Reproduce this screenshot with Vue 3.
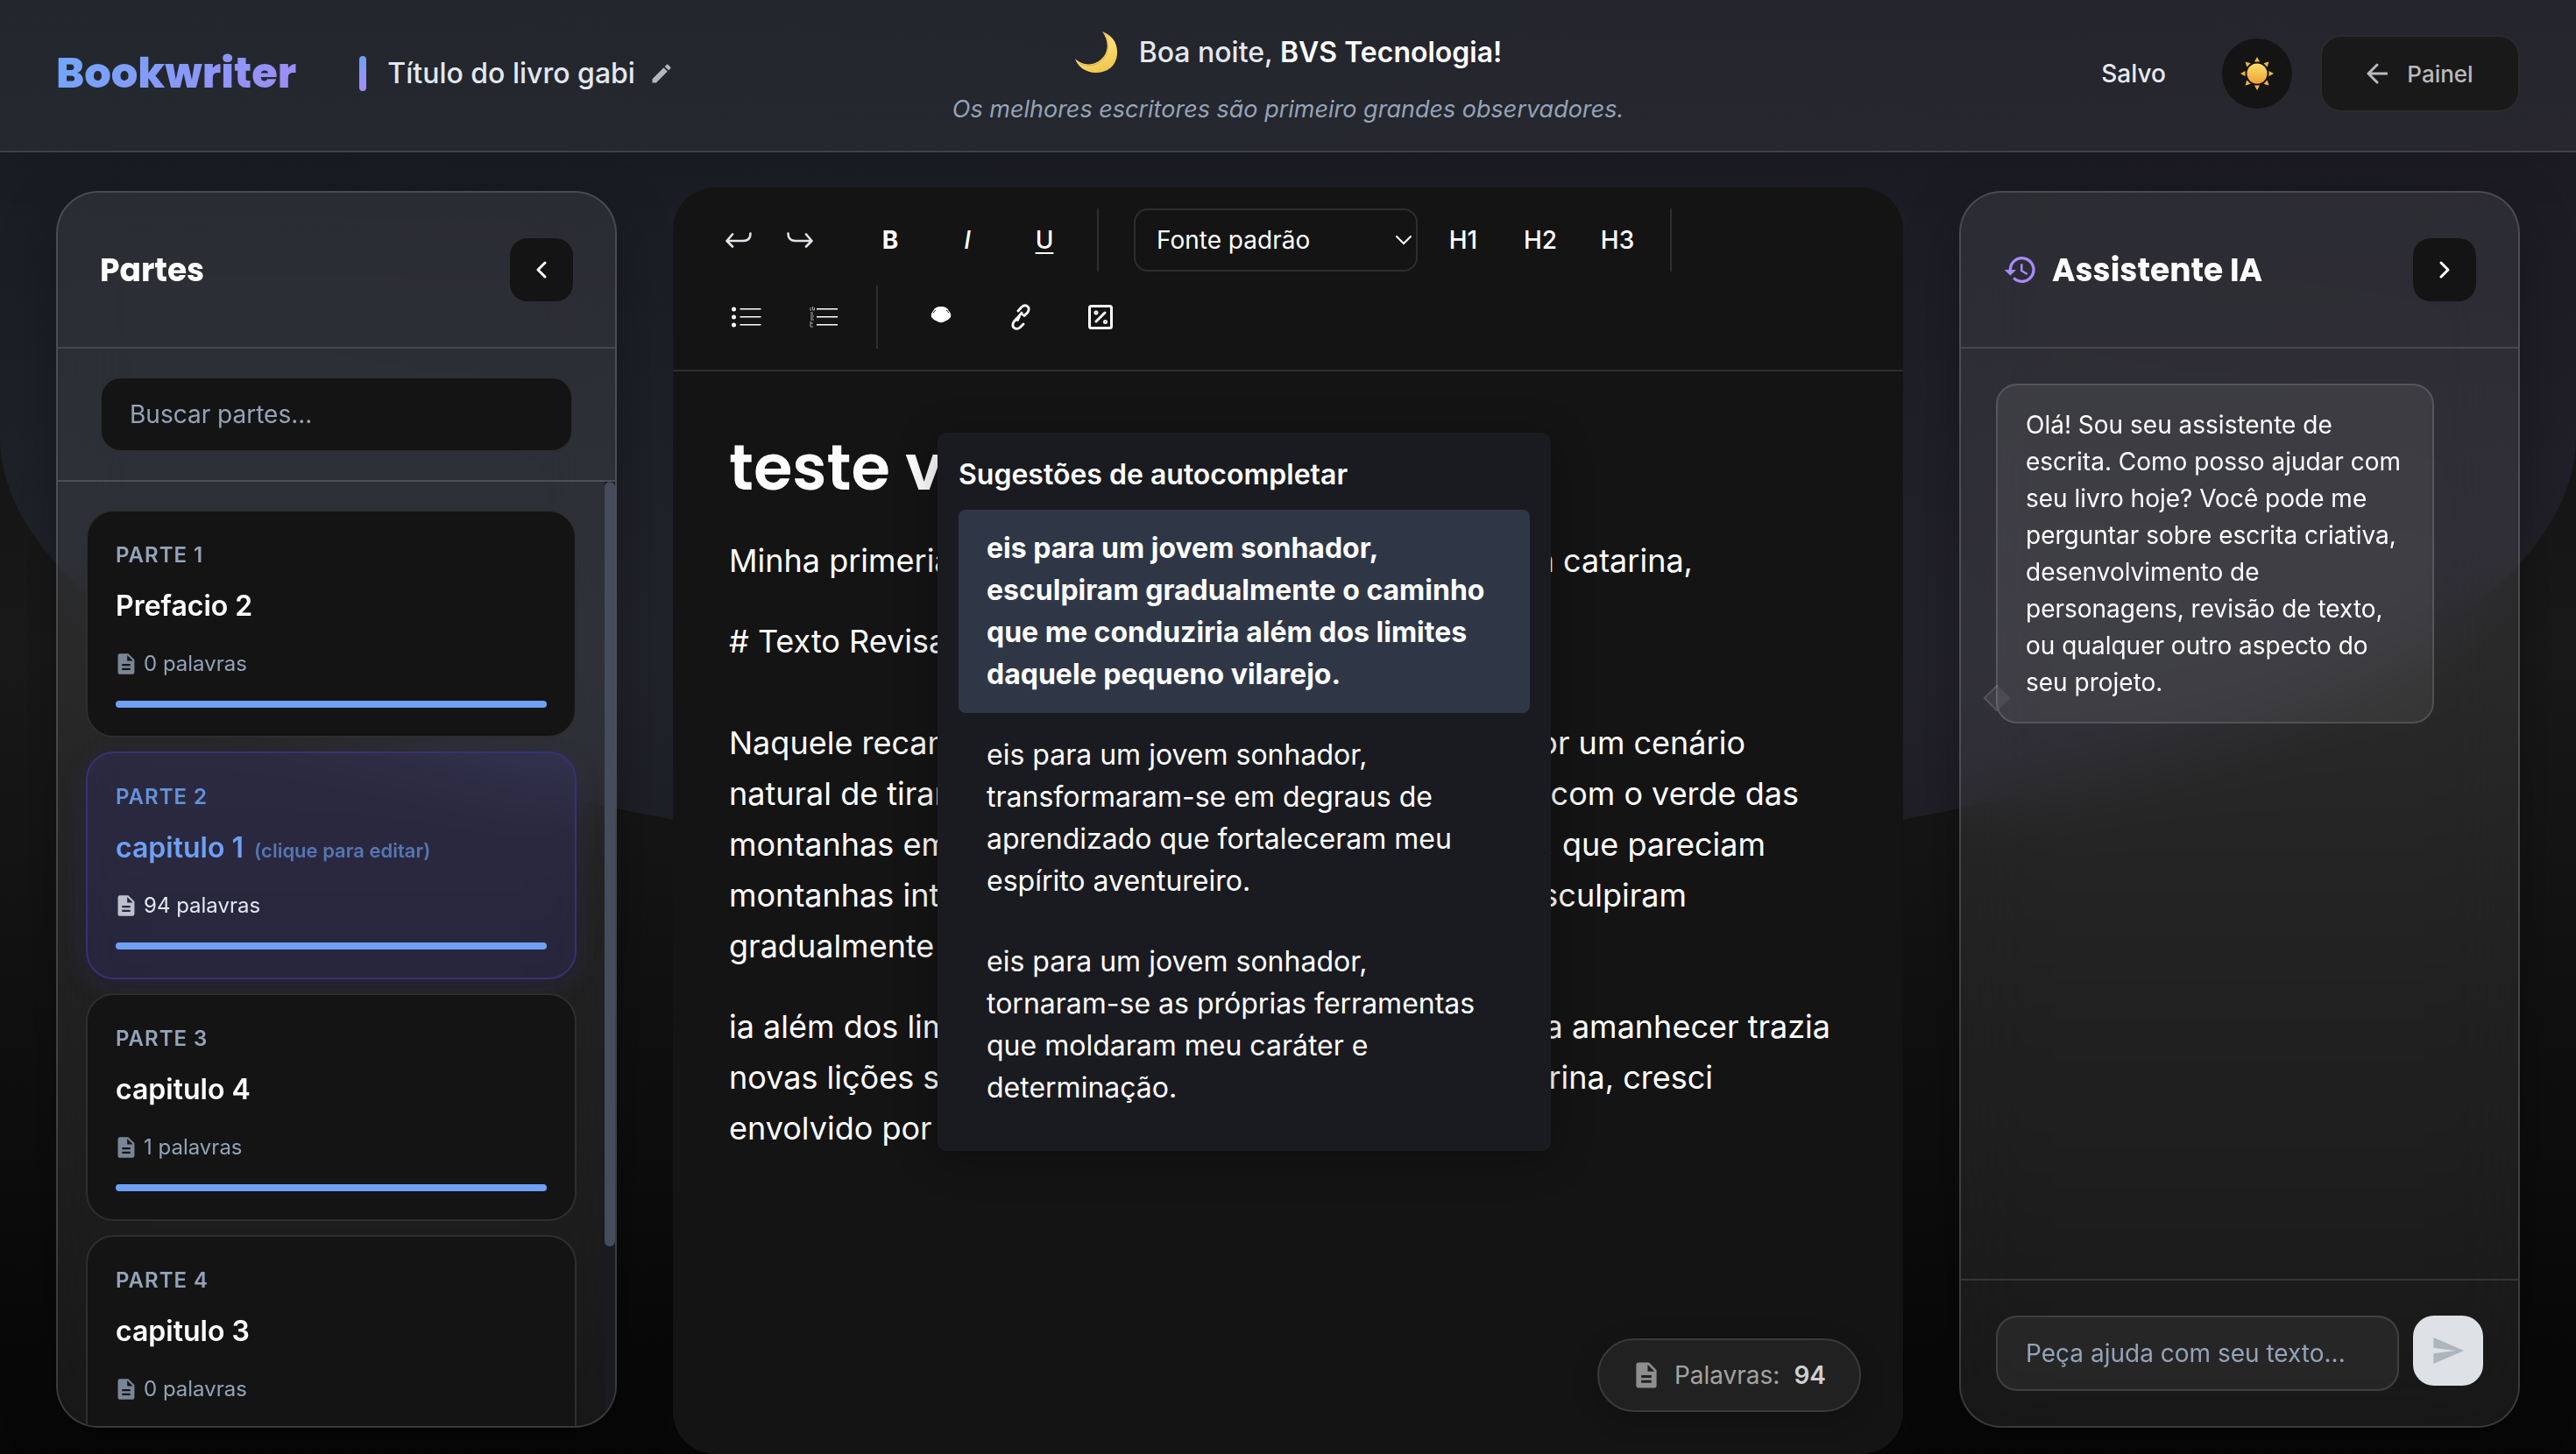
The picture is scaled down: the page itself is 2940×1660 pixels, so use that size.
<script setup>
import { ref } from 'vue'

const search = ref('')
const question = ref('')
const font = ref('default')
const activePart = ref(2)

const parts = [
  { id: 1, title: 'Prefacio 2', words: 0 },
  { id: 2, title: 'capitulo 1', words: 94 },
  { id: 3, title: 'capitulo 4', words: 1 },
  { id: 4, title: 'capitulo 3', words: 0 },
]

// Each line keeps its opening and closing words; `width` is the measured line length.
const paragraphs = [
  [{ start: 'Minha primeria', end: 'a catarina,', width: 1100 }],
  [{ start: '# Texto Revisado', end: '', width: 400 }, { start: '', end: '', width: 0 }],
  [
    { start: 'Naquele recanto', end: 'por um cenário', width: 1160 },
    { start: 'natural de tirar', end: 'com o verde das', width: 1221 },
    { start: 'montanhas em', end: ', que pareciam', width: 1183 },
    { start: 'montanhas inte', end: 'esculpiram', width: 1093 },
    { start: 'gradualmente', end: '', width: 400 },
  ],
  [
    { start: 'ia além dos limites', end: 'a amanhecer trazia', width: 1257 },
    { start: 'novas lições so', end: 'arina, cresci', width: 1123 },
    { start: 'envolvido por', end: '', width: 400 },
  ],
]

const suggestions = [
  'eis para um jovem sonhador, esculpiram gradualmente o caminho que me conduziria além dos limites daquele pequeno vilarejo.',
  'eis para um jovem sonhador, transformaram-se em degraus de aprendizado que fortaleceram meu espírito aventureiro.',
  'eis para um jovem sonhador, tornaram-se as próprias ferramentas que moldaram meu caráter e determinação.',
]
const selected = ref(0)
const rays = [0, 45, 90, 135, 180, 225, 270, 315]
</script>

<template>
  <div class="app">
    <div class="glow"></div>

    <header class="topbar">
      <div class="brand-area">
        <span class="logo">Bookwriter</span>
        <div class="book">
          <span class="book-bar"></span>
          <span class="book-title">Título do livro gabi</span>
          <button class="icon-plain" aria-label="Editar título">
            <svg width="28" height="28" viewBox="0 0 24 24" fill="#b4b6bb"><path d="M3 17.25V21h3.75L17.81 9.94l-3.75-3.75L3 17.25zM20.71 7.04a1 1 0 0 0 0-1.41l-2.34-2.34a1 1 0 0 0-1.41 0l-1.83 1.83 3.75 3.75 1.83-1.83z" /></svg>
          </button>
        </div>
      </div>

      <div class="greeting">
        <p class="hello">
          <svg class="moon" width="50" height="50" viewBox="0 0 50 50">
            <defs>
              <linearGradient id="moonFill" x1="0.2" y1="0" x2="0.7" y2="1">
                <stop offset="0" stop-color="#d9a534" />
                <stop offset="0.45" stop-color="#ffe27a" />
                <stop offset="1" stop-color="#eec34a" />
              </linearGradient>
            </defs>
            <path d="M32 1C43 5 50 14 49 27C48 40 38 48 25 48C13 48 4 41 1 32C7 38 16 40 24 37C37 32 43 16 32 1Z" fill="url(#moonFill)" />
            <path d="M36 7C42 18 38 33 26 38C18 41 10 40 5 37" fill="none" stroke="#c8982f" stroke-width="1" opacity=".6" />
          </svg>
          <span>Boa noite, <strong>BVS Tecnologia!</strong></span>
        </p>
        <p class="quote">Os melhores escritores são primeiro grandes observadores.</p>
      </div>

      <div class="actions">
        <span class="saved">Salvo</span>
        <button class="theme" aria-label="Alternar tema">
          <svg width="38" height="38" viewBox="-19 -19 38 38">
            <defs>
              <linearGradient id="sunFill" x1="0" y1="0" x2="0" y2="1">
                <stop offset="0" stop-color="#fbe26a" />
                <stop offset="1" stop-color="#ef9f35" />
              </linearGradient>
            </defs>
            <path v-for="r in rays" :key="r" d="M-3 -13.500 0 -19 3 -13.500Z" :transform="`rotate(${r})`" fill="#f5b73c" />
            <circle r="11.500" fill="url(#sunFill)" />
          </svg>
        </button>
        <button class="dashboard">
          <svg width="24" height="24" viewBox="0 0 24 24" fill="none" stroke="#b9babd" stroke-width="3" stroke-linecap="round" stroke-linejoin="round"><path d="M23 12H2M12 2 2 12l10 10" /></svg>
          <span>Painel</span>
        </button>
      </div>
    </header>

    <main class="workspace">
      <aside class="panel parts">
        <div class="panel-head">
          <h2>Partes</h2>
          <button class="square" aria-label="Recolher partes">
            <svg width="24" height="24" viewBox="0 0 24 24" fill="none" stroke="#fff" stroke-width="3" stroke-linecap="round" stroke-linejoin="round"><path d="M16 4 8 12l8 8" /></svg>
          </button>
        </div>
        <div class="search">
          <input v-model="search" type="search" placeholder="Buscar partes..." aria-label="Buscar partes" />
        </div>
        <div class="list-wrap">
          <ul class="list">
            <li v-for="p in parts" :key="p.id" class="card" :class="{ active: p.id === activePart }" @click="activePart = p.id">
              <span class="card-label">PARTE {{ p.id }}</span>
              <h3 class="card-title">{{ p.title }} <small v-if="p.id === activePart">(clique para editar)</small></h3>
              <p class="card-meta">
                <svg width="24" height="26" viewBox="2 1 20 22" fill="currentColor"><path d="M14 2H6a2 2 0 0 0-2 2v16c0 1.100.890 2 2 2h12a2 2 0 0 0 2-2V8l-6-6zm2 16H8v-2h8v2zm0-4H8v-2h8v2zm-3-5V3.500L18.500 9H13z" /></svg>
                <span>{{ p.words }} palavras</span>
              </p>
              <div class="progress"></div>
            </li>
          </ul>
          <div class="track"><div class="thumb"></div></div>
        </div>
      </aside>

      <section class="editor">
        <div class="toolbar">
          <div class="row">
            <button class="tool small" aria-label="Desfazer">
              <svg width="30" height="18" viewBox="0 0 30 18" fill="none" stroke="#e2e4ea" stroke-width="2.600" stroke-linecap="round" stroke-linejoin="round"><path d="M8 2.500 1.500 10 8 16.500M2 10H20Q28.500 10 28.500 1.500" /></svg>
            </button>
            <button class="tool small" aria-label="Refazer">
              <svg width="30" height="18" viewBox="0 0 30 18" fill="none" stroke="#e2e4ea" stroke-width="2.600" stroke-linecap="round" stroke-linejoin="round"><path d="M22 2.500 28.500 10 22 16.500M28 10H10Q1.500 10 1.500 1.500" /></svg>
            </button>
            <div class="marks">
              <button class="tool bold">B</button>
              <button class="tool italic">I</button>
              <button class="tool underline">U</button>
            </div>
            <span class="sep"></span>
            <label class="font-pick">
              <select v-model="font" aria-label="Fonte">
                <option value="default">Fonte padrão</option>
                <option value="serif">Serifada</option>
              </select>
              <svg width="20" height="12" viewBox="0 0 20 12" fill="none" stroke="#fff" stroke-width="2" stroke-linecap="round"><path d="M2 2l8 8 8-8" /></svg>
            </label>
            <button class="tool">H1</button>
            <button class="tool">H2</button>
            <button class="tool">H3</button>
            <span class="sep"></span>
          </div>
          <div class="row">
            <button class="tool" aria-label="Lista com marcadores">
              <svg width="34" height="24" viewBox="0 0 34 24"><g fill="#fff"><circle cx="2.500" cy="3" r="2.500" /><circle cx="2.500" cy="12" r="2.500" /><circle cx="2.500" cy="21" r="2.500" /><path d="M9.500 2h24v1.500h-24zM9.500 11h24v1.500h-24zM9.500 20h24v1.500h-24z" /></g></svg>
            </button>
            <button class="tool" aria-label="Lista numerada">
              <svg width="32" height="24" viewBox="0 0 32 24"><path fill="#fff" d="M8 2h24v1.500H8zM8 11h24v1.500H8zM8 20h24v1.500H8z" /><path d="M1 1v4M3.500 0v4h2V1M1 7h3M1 9h3M1 11h4M1 13h3M1 15h4M1 17v6h3M1 19h3" fill="none" stroke="#aaa" stroke-width="1" /></svg>
            </button>
            <span class="sep"></span>
            <button class="tool push" aria-label="Comentário">
              <svg width="24" height="26" viewBox="0 0 24 26"><path d="M3 6Q5 1 12 1T21 6Q24 9 23 13Q21 16 17 17.500Q12 21 7 17.500Q3 16 1 13Q0 9 3 6Z" fill="#fff" /><path d="M3 8.500Q4 6 6 5M18 5Q20 6 21 8.500" fill="none" stroke="#141414" stroke-width="1" /></svg>
            </button>
            <button class="tool wide" aria-label="Link">
              <svg width="22" height="32" viewBox="0 0 22 30" fill="none" stroke="#fff" stroke-width="2.800" stroke-linecap="round" stroke-linejoin="round"><path d="M8 8 12 3.500Q16 0 19.500 3.500Q21 6 19 9.500L15 13.500 13 12M14 23 10 27Q6 30 2.500 26.500Q1 24 3 20.500L6 17 8 15 12 10M7.500 18.500 9.500 14" /></svg>
            </button>
            <button class="tool" aria-label="Inserir variável">
              <svg width="28" height="28" viewBox="0 0 28 28" fill="none" stroke="#fff" stroke-width="3" stroke-linecap="round"><rect x="1.500" y="1.500" width="25" height="25" rx="2" /><path d="M9 19 19 9" /><circle cx="9" cy="9" r="1" /><circle cx="19.500" cy="19.500" r="1" /></svg>
            </button>
          </div>
        </div>

        <article class="page">
          <h1>teste v</h1>
          <p v-for="(para, i) in paragraphs" :key="i">
            <span v-for="(line, j) in para" :key="j" class="line" :style="{ width: line.width + 'px' }">
              <span>{{ line.start }}</span><span>{{ line.end }}</span>
            </span>
          </p>
        </article>

        <div class="suggest" role="listbox" aria-label="Sugestões de autocompletar">
          <h4>Sugestões de autocompletar</h4>
          <button v-for="(s, i) in suggestions" :key="i" class="option" :class="{ chosen: i === selected }" role="option" @click="selected = i">{{ s }}</button>
        </div>

        <div class="count">
          <svg width="32" height="32" viewBox="2 1 20 22" fill="#8e8e8e"><path d="M14 2H6a2 2 0 0 0-2 2v16c0 1.100.890 2 2 2h12a2 2 0 0 0 2-2V8l-6-6zm2 16H8v-2h8v2zm0-4H8v-2h8v2zm-3-5V3.500L18.500 9H13z" /></svg>
          <span>Palavras:</span><strong>94</strong>
        </div>
      </section>

      <aside class="panel assistant">
        <div class="panel-head">
          <h2>
            <svg width="40" height="40" viewBox="0 0 24 24" fill="#a78bfa"><path d="M13 3a9 9 0 0 0-9 9H1l3.890 3.890.070.140L9 12H6a7 7 0 1 1 2.060 4.940l-1.420 1.420A9 9 0 1 0 13 3zm-1 5v5l4.280 2.540.720-1.210-3.500-2.080V8H12z" /></svg>
            Assistente IA
          </h2>
          <button class="square" aria-label="Recolher assistente">
            <svg width="24" height="24" viewBox="0 0 24 24" fill="none" stroke="#fff" stroke-width="3" stroke-linecap="round" stroke-linejoin="round"><path d="m8 4 8 8-8 8" /></svg>
          </button>
        </div>
        <div class="chat">
          <div class="bubble">Olá! Sou seu assistente de escrita. Como posso ajudar com seu livro hoje? Você pode me perguntar sobre escrita criativa, desenvolvimento de personagens, revisão de texto, ou qualquer outro aspecto do seu projeto.</div>
        </div>
        <form class="ask" @submit.prevent>
          <input v-model="question" type="text" placeholder="Peça ajuda com seu texto..." aria-label="Pergunta ao assistente" />
          <button class="send" aria-label="Enviar">
            <svg width="40" height="40" viewBox="0 0 24 24" fill="#adb5bd"><path d="M2.010 21 23 12 2.010 3 2 10l15 2-15 2z" /></svg>
          </button>
        </form>
      </aside>
    </main>
  </div>
</template>

<style>
body {
  margin: 0;
  background: #0a0a0a;
}
</style>

<style scoped>
* {
  box-sizing: border-box;
}
h1, h2, h3, h4, p, ul {
  margin: 0;
  padding: 0;
}
button, input, select {
  font: inherit;
  color: inherit;
}
button {
  border: 0;
  padding: 0;
  background: none;
  cursor: pointer;
}
svg {
  display: block;
  flex: none;
}
.app {
  position: relative;
  display: flex;
  flex-direction: column;
  height: 100vh;
  overflow: hidden;
  background: linear-gradient(180deg, #101010 0%, #191919 45%, #060606 100%);
  color: #fff;
  font-family: Inter, sans-serif;
  font-size: 28px;
}
.glow {
  position: absolute;
  inset: 0 0 auto;
  height: 60vh;
  border-radius: 0 0 50% 50%;
  background: linear-gradient(135deg, rgba(110, 160, 245, .08), rgba(160, 135, 240, .08));
}

/* Top bar */
.topbar {
  position: relative;
  display: grid;
  grid-template-columns: 1fr auto 1fr;
  align-items: center;
  flex: none;
  height: 174px;
  padding: 0 64px 4px;
  border-bottom: 2px solid rgba(255, 255, 255, .12);
  background: rgba(255, 255, 255, .05);
  box-shadow: 0 8px 64px rgba(0, 0, 0, .1);
}
.brand-area, .book, .actions, .hello {
  display: flex;
  align-items: center;
}
.brand-area {
  gap: 72px;
}
.logo {
  font-family: Poppins, Inter, sans-serif;
  font-size: 48px;
  font-weight: 800;
  line-height: 64px;
  background: linear-gradient(135deg, #6ea8f8, #a08bf5);
  background-clip: text;
  -webkit-background-clip: text;
  color: transparent;
}
.book-bar {
  width: 8px;
  height: 40px;
  margin-right: 24px;
  border-radius: 4px;
  background: linear-gradient(180deg, #6ea0f5, #a78bfa);
}
.book-title {
  margin-right: 16px;
  font-size: 32px;
  font-weight: 500;
  line-height: 48px;
  color: #e2e8f0;
}
.greeting {
  display: flex;
  flex-direction: column;
  align-items: center;
  gap: 20px;
  padding-top: 12px;
}
.hello {
  gap: 24px;
  font-size: 32px;
  font-weight: 500;
  line-height: 48px;
  color: #e2e8f0;
}
.hello strong {
  font-weight: 600;
  color: #fff;
}
.quote {
  font-size: 27px;
  font-style: italic;
  line-height: 40px;
  color: #94a3b8;
}
.actions {
  justify-content: flex-end;
}
.saved {
  margin-right: 64px;
  font-weight: 500;
  color: #e8eaf0;
}
.theme {
  display: grid;
  place-items: center;
  width: 80px;
  height: 80px;
  margin-right: 32px;
  border-radius: 50%;
  background: #141414;
}
.dashboard {
  display: flex;
  align-items: center;
  justify-content: center;
  gap: 22px;
  width: 228px;
  height: 88px;
  border: 2px solid #2b2b2d;
  border-radius: 24px;
  background: #191919;
  color: #b9babd;
  font-size: 26px;
  font-weight: 500;
}

/* Columns */
.workspace {
  position: relative;
  display: grid;
  grid-template-columns: 640px minmax(0, 1fr) 640px;
  gap: 64px;
  flex: 1;
  min-height: 0;
  padding: 40px 64px 0;
}
.panel {
  display: flex;
  flex-direction: column;
  min-height: 0;
  margin: 4px 0 30px;
  overflow: hidden;
  border: 2px solid rgba(255, 255, 255, .15);
  border-radius: 48px;
  background: rgba(255, 255, 255, .07);
  backdrop-filter: blur(40px);
  box-shadow: 0 16px 64px rgba(0, 0, 0, .3);
}
.panel-head {
  display: flex;
  align-items: center;
  justify-content: space-between;
  flex: none;
  height: 178px;
  padding: 0 48px;
  border-bottom: 2px solid rgba(255, 255, 255, .12);
}
.panel-head h2 {
  display: flex;
  align-items: center;
  gap: 16px;
  font-family: Poppins, Inter, sans-serif;
  font-size: 36px;
  font-weight: 700;
}
.square {
  display: grid;
  place-items: center;
  width: 72px;
  height: 72px;
  border-radius: 20px;
  background: #141414;
}
.search {
  flex: none;
  padding: 32px 48px;
  border-bottom: 2px solid rgba(255, 255, 255, .15);
}
.search input {
  display: block;
  width: 100%;
  height: 86px;
  padding: 0 32px;
  border: 2px solid #2e2e30;
  border-radius: 24px;
  outline: 0;
  background: #141414;
}
input::placeholder {
  color: #94a3b8;
  opacity: 1;
}
.list-wrap {
  display: flex;
  flex: 1;
  min-height: 0;
}
.list {
  display: flex;
  flex-direction: column;
  gap: 16px;
  flex: 1;
  overflow: hidden;
  padding: 32px 32px 0;
  list-style: none;
}
.card {
  flex: none;
  padding: 32px;
  border: 2px solid #2e2e2e;
  border-radius: 32px;
  background: #141414;
}
.card-label {
  display: block;
  margin-bottom: 16px;
  font-size: 24px;
  font-weight: 600;
  line-height: 36px;
  letter-spacing: 1px;
  color: #94a3b8;
}
.card-title {
  display: flex;
  align-items: baseline;
  gap: 12px;
  margin-bottom: 24px;
  font-size: 32px;
  font-weight: 600;
  line-height: 48px;
}
.card-title small {
  font-size: 22px;
  line-height: 24px;
  color: #5576b3;
}
.card-meta {
  display: flex;
  align-items: center;
  gap: 8px;
  margin-bottom: 24px;
  font-size: 24px;
  line-height: 36px;
  color: #94a3b8;
}
.card-meta svg {
  opacity: .8;
}
.progress {
  height: 8px;
  border-radius: 4px;
  background: #6ea0f5;
}
.card.active {
  border-color: #3a3075;
  background: rgba(76, 62, 220, .14);
  box-shadow: 0 8px 32px rgba(76, 62, 220, .13);
}
.active .card-label {
  color: #6393dc;
}
.active .card-title {
  color: #6ea0f5;
}
.active .card-meta {
  color: #e2e8f0;
}
.track {
  width: 12px;
  background: #1a1b21;
}
.thumb {
  height: 81%;
  border-radius: 6px;
  background: #454c5c;
}

/* Editor */
.editor {
  position: relative;
  min-width: 0;
  border-radius: 48px;
  background: #141414;
}
.toolbar {
  display: flex;
  flex-direction: column;
  gap: 16px;
  padding: 24px 48px;
  border-bottom: 2px solid #2e2e2e;
}
.row {
  display: flex;
  gap: 16px;
}
.marks {
  display: flex;
  gap: 16px;
  margin-left: 24px;
}
.tool {
  display: grid;
  place-items: center;
  width: 72px;
  height: 72px;
  font-weight: 500;
}
.tool.small {
  width: 54px;
}
.tool.wide {
  width: 78px;
}
.tool.push {
  margin-left: 12px;
}
.bold {
  font-weight: 700;
}
.italic {
  font-style: italic;
}
.underline {
  text-decoration: underline;
  text-underline-offset: 4px;
}
.sep {
  width: 2px;
  margin: 0 8px;
  background: #2e2e2e;
}
.font-pick {
  position: relative;
  margin-left: 16px;
}
.font-pick select {
  width: 324px;
  height: 72px;
  padding: 0 24px;
  border: 2px solid #2e2e2e;
  border-radius: 16px;
  outline: 0;
  appearance: none;
  background: #141414;
}
.font-pick svg {
  position: absolute;
  top: 30px;
  right: 6px;
}
.page {
  padding: 60px 64px;
  font-size: 36px;
  line-height: 58px;
}
.page h1 {
  margin-bottom: 27px;
  font-family: Poppins, Inter, sans-serif;
  font-size: 72px;
  font-weight: 600;
  line-height: 100px;
}
.page p {
  margin-bottom: 34px;
}
.page p:nth-of-type(2) {
  margin-bottom: 0;
}
.line {
  display: flex;
  justify-content: space-between;
  min-height: 58px;
  max-width: 100%;
  white-space: nowrap;
}
.suggest {
  position: absolute;
  top: 280px;
  left: 302px;
  width: 700px;
  padding: 24px;
  border-radius: 10px;
  background: #1a1b20;
  box-shadow: 0 8px 48px rgba(0, 0, 0, .3);
  font-size: 32px;
  line-height: 48px;
}
.suggest h4 {
  margin-bottom: 16px;
  font-weight: 600;
}
.option {
  display: block;
  width: 100%;
  margin-bottom: 4px;
  padding: 20px 32px;
  border-radius: 8px;
  text-align: left;
}
.chosen {
  background: #2f3747;
  font-weight: 700;
}
.count {
  position: absolute;
  right: 48px;
  bottom: 48px;
  display: flex;
  align-items: center;
  gap: 16px;
  height: 84px;
  padding: 0 38px;
  border: 2px solid #3a3a3a;
  border-radius: 42px;
  background: #212121;
  box-shadow: 0 8px 32px rgba(0, 0, 0, .2);
  color: #a3a3a3;
}
.count strong {
  font-weight: 600;
  color: #d0d0d0;
}

/* Assistant */
.chat {
  flex: 1;
  min-height: 0;
  padding: 40px;
}
.bubble {
  position: relative;
  width: 500px;
  padding: 24px 32px;
  border: 2px solid rgba(255, 255, 255, .13);
  border-radius: 24px;
  background: rgba(255, 255, 255, .07);
  line-height: 42px;
}
.bubble::before {
  content: '';
  position: absolute;
  left: -12px;
  bottom: 16px;
  width: 20px;
  height: 20px;
  border-left: 2px solid rgba(255, 255, 255, .12);
  border-bottom: 2px solid rgba(255, 255, 255, .12);
  background: rgba(255, 255, 255, .07);
  transform: rotate(45deg);
}
.ask {
  display: flex;
  gap: 16px;
  flex: none;
  padding: 40px;
  border-top: 2px solid rgba(255, 255, 255, .12);
}
.ask input {
  flex: 1;
  min-width: 0;
  height: 86px;
  padding: 0 32px;
  border: 2px solid rgba(255, 255, 255, .12);
  border-radius: 24px;
  outline: 0;
  background: rgba(255, 255, 255, .06);
}
.send {
  display: grid;
  place-items: center;
  width: 80px;
  height: 80px;
  border-radius: 24px;
  background: #dee2e6;
}
</style>
